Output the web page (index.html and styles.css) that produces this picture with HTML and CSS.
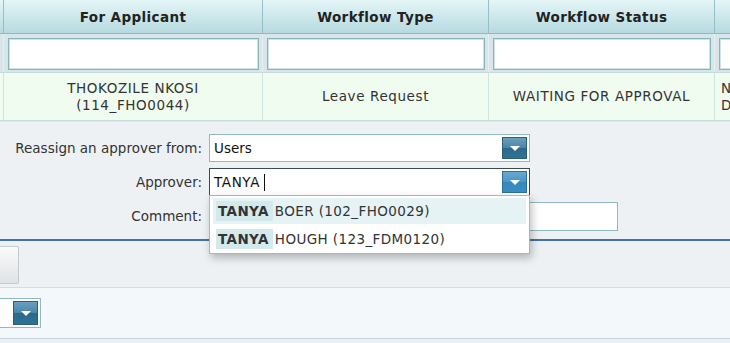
FILE: index.html
```html
<!DOCTYPE html>
<html lang="en">
<head>
  <meta charset="UTF-8">
  <title>Workflow - Reassign Approver</title>
  <link rel="stylesheet" href="styles.css">
</head>
<body>
<div class="page">
  <!-- Workflow grid -->
  <table class="grid">
    <colgroup>
      <col class="col-sel">
      <col class="col-applicant">
      <col class="col-type">
      <col class="col-status">
      <col class="col-more">
    </colgroup>
    <thead>
      <tr class="head-row">
        <th></th>
        <th>For Applicant</th>
        <th>Workflow Type</th>
        <th>Workflow Status</th>
        <th></th>
      </tr>
      <tr class="filter-row">
        <td></td>
        <td><input class="filter" type="text"></td>
        <td><input class="filter" type="text"></td>
        <td><input class="filter" type="text"></td>
        <td><input class="filter" type="text"></td>
      </tr>
    </thead>
    <tbody>
      <tr class="data-row">
        <td></td>
        <td>THOKOZILE NKOSI<br>(114_FHO0044)</td>
        <td>Leave Request</td>
        <td>WAITING FOR APPROVAL</td>
        <td class="left">N<br>D</td>
      </tr>
    </tbody>
  </table>

  <!-- Reassign form -->
  <div class="reassign">
    <label class="label">Reassign an approver from:</label>
    <div class="combo">
      <span class="combo-text">Users</span>
      <span class="combo-btn dark">
        <svg width="12" height="7" viewBox="0 0 12 7"><polygon points="1,1 11,1 6,6" fill="#fff"/></svg>
      </span>
    </div>

    <label class="label">Approver:</label>
    <div class="combo focused">
      <span class="combo-text typed">TANYA <span class="caret"></span></span>
      <span class="combo-btn light">
        <svg width="12" height="7" viewBox="0 0 12 7"><polygon points="1,1 11,1 6,6" fill="#fff"/></svg>
      </span>
      <ul class="suggest">
        <li class="hover"><b class="match">TANYA</b>BOER (102_FHO0029)</li>
        <li><b class="match">TANYA</b>HOUGH (123_FDM0120)</li>
      </ul>
    </div>

    <label class="label">Comment:</label>
    <div><input class="comment" type="text"></div>
  </div>

  <div class="actions">
    <button class="btn"></button>
  </div>

  <div class="footer-bar">
    <div class="combo small">
      <span class="combo-btn dark">
        <svg width="12" height="7" viewBox="0 0 12 7"><polygon points="1,1 11,1 6,6" fill="#fff"/></svg>
      </span>
    </div>
  </div>
</div>
</body>
</html>
```

FILE: styles.css
```css
body {
  margin: 0;
  font-family: "DejaVu Sans", Verdana, sans-serif;
  font-size: 13.5px;
  color: #333;
  background: #edf1f3;
}
.page {
  width: 730px;
  height: 343px;
  overflow: hidden;
  position: relative;
}
.grid {
  border-collapse: collapse;
  table-layout: fixed;
  width: 848px;
  margin-left: -37px;
}
.col-sel { width: 40px; }
.col-applicant { width: 259px; }
.col-type { width: 226px; }
.col-status { width: 226px; }
.col-more { width: 97px; }
.head-row th {
  height: 33px;
  padding: 0;
  font-weight: bold;
  letter-spacing: 0.4px;
  color: #222;
  background: linear-gradient(to bottom, #e4f5f7, #b6dadf);
  border-left: 1px solid #95c0c7;
  border-bottom: 1px solid #8fbac1;
}
.filter-row td {
  height: 33px;
  padding: 3px 3px 2px 4px;
  background: #d8e5e9;
  border-left: 1px solid #e6eef1;
  border-bottom: 1px solid #c8d9dd;
}
.filter {
  box-sizing: border-box;
  width: 100%;
  height: 32px;
  border: 1px solid #88b5bc;
  box-shadow: inset 0 0 0 1px #cfe3e6;
  background: #fff;
  margin: 0;
  display: block;
}
.data-row td {
  height: 47px;
  padding: 0;
  text-align: center;
  line-height: 17px;
  letter-spacing: 0.6px;
  background: #effcef;
  border-left: 1px solid #cfe3df;
  border-bottom: 1px solid #c8dcd9;
  color: #333;
}
.data-row td.left {
  text-align: left;
  padding-left: 6px;
}
.reassign {
  display: grid;
  grid-template-columns: 209px 321px;
  grid-auto-rows: 28px;
  row-gap: 6px;
  align-items: center;
  padding: 12px 0 9px;
  border-top: 1px solid #dde6e9;
  border-bottom: 2px solid #4670a8;
}
.label {
  text-align: right;
  padding-right: 7px;
  color: #333;
}
.combo {
  position: relative;
  box-sizing: border-box;
  height: 28px;
  border: 1px solid #8fbac1;
  background: #fff;
  display: flex;
  align-items: center;
}
.combo.focused {
  border-color: #3b4a4e;
}
.combo-text {
  padding-left: 4px;
  color: #111;
  display: flex;
  align-items: center;
}
.combo-text.typed {
  letter-spacing: 0.6px;
}
.caret {
  display: inline-block;
  width: 1px;
  height: 17px;
  background: #111;
  margin-left: 4px;
}
.combo-btn {
  position: absolute;
  right: 2px;
  top: 2px;
  bottom: 2px;
  width: 25px;
  display: flex;
  align-items: center;
  justify-content: center;
  border: 1px solid #2c5f78;
  box-sizing: border-box;
}
.combo-btn.dark {
  background: linear-gradient(to bottom, #6a9fbe 0%, #4b86a8 48%, #2b6a8c 52%, #2f7195 100%);
}
.combo-btn.light {
  background: linear-gradient(to bottom, #66a9d3 0%, #4a97c6 48%, #3488bb 52%, #3a8fc2 100%);
  border-color: #2f6f96;
}
.suggest {
  position: absolute;
  top: 100%;
  left: -1px;
  width: 321px;
  box-sizing: border-box;
  margin: 0;
  padding: 2px 3px 0;
  list-style: none;
  background: #fff;
  border: 1px solid #98bec4;
  box-shadow: 2px 4px 8px rgba(0, 0, 0, 0.25);
  z-index: 2;
}
.suggest li {
  height: 26px;
  line-height: 26px;
  padding-left: 3px;
  margin-bottom: 2px;
  letter-spacing: 0.4px;
  color: #333;
  white-space: nowrap;
}
.suggest li:last-child {
  margin-bottom: 1px;
}
.suggest li.hover {
  background: #e5f3f5;
}
.match {
  background: #d3e9ec;
  padding: 2px 4px 2px 2px;
  margin-right: 2px;
  color: #333;
}
.comment {
  box-sizing: border-box;
  width: 409px;
  height: 29px;
  border: 1px solid #8fbac1;
  background: #fff;
  display: block;
  margin: 0;
}
.actions {
  height: 47px;
  padding-top: 5px;
  box-sizing: border-box;
  border-bottom: 1px solid #d2dee2;
}
.btn {
  width: 80px;
  height: 38px;
  margin-left: -61px;
  border: 1px solid #c2cacd;
  border-radius: 2px;
  background: linear-gradient(to bottom, #fafbfb, #dfe3e5);
  display: block;
}
.footer-bar {
  height: 51px;
  padding-top: 10px;
  box-sizing: border-box;
  background: #f3f8fa;
  border-bottom: 1px solid #c3d5da;
}
.combo.small {
  width: 80px;
  height: 30px;
  margin-left: -39px;
}
```
